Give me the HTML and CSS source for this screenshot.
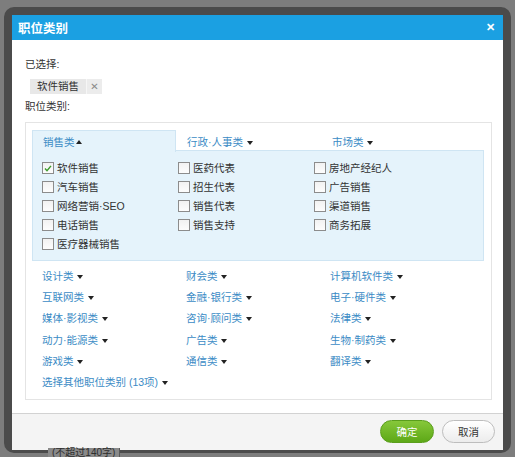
FILE: index.html
```html
<!DOCTYPE html>
<html lang="zh">
<head>
<meta charset="utf-8">
<link rel="stylesheet" href="styles.css">
</head>
<body>
<div class="page">
  <div class="under">(不超过140字)</div>
</div>
<div class="frame">
  <div class="dialog">
    <div class="hd">
      <span class="title">职位类别</span>
      <span class="close">✕</span>
    </div>
    <div class="bd">
      <div class="label">已选择:</div>
      <div class="tags">
        <span class="tag"><span class="tag-text">软件销售</span><span class="tag-x">✕</span></span>
      </div>
      <div class="label">职位类别:</div>
      <div class="box">
        <div class="tabs">
          <div class="tab active">销售类<span class="up"></span></div>
          <div class="tab">行政·人事类 <span class="down"></span></div>
          <div class="tab">市场类 <span class="down"></span></div>
        </div>
        <div class="panel">
          <label class="opt"><span class="cb checked"><svg viewBox="0 0 11 11" width="11" height="11"><path d="M2.2 5.6 L4.4 7.9 L8.8 2.6" fill="none" stroke="#3c9a2a" stroke-width="1.6"/></svg></span>软件销售</label>
          <label class="opt"><span class="cb"></span>医药代表</label>
          <label class="opt"><span class="cb"></span>房地产经纪人</label>
          <label class="opt"><span class="cb"></span>汽车销售</label>
          <label class="opt"><span class="cb"></span>招生代表</label>
          <label class="opt"><span class="cb"></span>广告销售</label>
          <label class="opt"><span class="cb"></span>网络营销·SEO</label>
          <label class="opt"><span class="cb"></span>销售代表</label>
          <label class="opt"><span class="cb"></span>渠道销售</label>
          <label class="opt"><span class="cb"></span>电话销售</label>
          <label class="opt"><span class="cb"></span>销售支持</label>
          <label class="opt"><span class="cb"></span>商务拓展</label>
          <label class="opt"><span class="cb"></span>医疗器械销售</label>
        </div>
        <div class="links">
          <a class="lk">设计类 <span class="down"></span></a>
          <a class="lk">财会类 <span class="down"></span></a>
          <a class="lk">计算机软件类 <span class="down"></span></a>
          <a class="lk">互联网类 <span class="down"></span></a>
          <a class="lk">金融·银行类 <span class="down"></span></a>
          <a class="lk">电子·硬件类 <span class="down"></span></a>
          <a class="lk">媒体·影视类 <span class="down"></span></a>
          <a class="lk">咨询·顾问类 <span class="down"></span></a>
          <a class="lk">法律类 <span class="down"></span></a>
          <a class="lk">动力·能源类 <span class="down"></span></a>
          <a class="lk">广告类 <span class="down"></span></a>
          <a class="lk">生物·制药类 <span class="down"></span></a>
          <a class="lk">游戏类 <span class="down"></span></a>
          <a class="lk">通信类 <span class="down"></span></a>
          <a class="lk">翻译类 <span class="down"></span></a>
          <a class="lk wide">选择其他职位类别 (13项) <span class="down"></span></a>
        </div>
      </div>
    </div>
    <div class="ft">
      <button class="btn ok">确定</button>
      <button class="btn cancel">取消</button>
    </div>
  </div>
</div>
</body>
</html>
```

FILE: styles.css
```css
* { box-sizing: border-box; }
html, body { margin: 0; padding: 0; }
body {
  width: 515px;
  height: 457px;
  overflow: hidden;
  background: #7d7d7d;
  font-family: "Liberation Sans", "Noto Sans CJK SC", sans-serif;
  font-size: 10.5px;
  color: #333;
  position: relative;
}
.page {
  padding: 446px 0 0 48px;
}
.under {
  position: relative;
  z-index: 1;
  display: inline-block;
  font-size: 10px;
  line-height: 10px;
  color: #2e2e2e;
  background: #8a8a8a;
  padding: 0 4px;
  border-right: 1px solid #5a5a5a;
}
.frame {
  position: absolute;
  left: 4px;
  top: 7px;
  width: 507px;
  height: 446px;
  background: #4b4b4b;
  border-radius: 10px;
  padding: 8px 8px 0 8px;
}
.dialog {
  background: #fff;
  width: 491px;
}
.hd {
  height: 25px;
  background: #1ba0e2;
  color: #fff;
  display: flex;
  align-items: center;
  justify-content: space-between;
  padding: 0 8px 0 6px;
}
.title {
  font-size: 12.5px;
  font-weight: bold;
}
.close {
  font-size: 11px;
  font-weight: bold;
  line-height: 1;
}
.bd {
  padding: 16px 11px 13px 13px;
}
.label {
  line-height: 16px;
  color: #333;
}
.tags {
  padding: 7px 0 4px 5px;
  display: flex;
}
.tag {
  display: flex;
  height: 15px;
  line-height: 15px;
  background: #e8e8e8;
}
.tag-text {
  padding: 0 7px 0 7px;
}
.tag-x {
  border-left: 1px solid #f6f6f6;
  width: 16px;
  text-align: center;
  color: #8a8a8a;
  font-family: "DejaVu Sans", sans-serif;
  font-size: 10px;
  background: #ececec;
}
.box {
  margin-top: 8px;
  border: 1px solid #e4e4e4;
  padding: 7px 7px 7px 6px;
}
.tabs {
  display: flex;
  height: 21px;
  border-bottom: 1px solid #cfe5f3;
}
.tab {
  width: 145px;
  padding-left: 10px;
  line-height: 22px;
  color: #3b8bc5;
  border: 1px solid transparent;
  border-bottom: none;
}
.tab.active {
  width: 144px;
  background: #e5f3fb;
  border-color: #cfe5f3;
  height: 22px;
  line-height: 22px;
}
.up {
  display: inline-block;
  width: 0; height: 0;
  border-left: 3.5px solid transparent;
  border-right: 3.5px solid transparent;
  border-bottom: 4px solid #222;
  vertical-align: 2px;
  margin-left: 1px;
}
.down {
  display: inline-block;
  width: 0; height: 0;
  border-left: 3.5px solid transparent;
  border-right: 3.5px solid transparent;
  border-top: 4px solid #222;
  vertical-align: 1px;
  margin-left: 1px;
}
.panel {
  background: #e5f3fb;
  border: 1px solid #cfe5f3;
  border-top: none;
  padding: 7px 0 7px 9px;
  display: grid;
  grid-template-columns: 136px 136px 136px;
  grid-auto-rows: 19px;
}
.opt {
  display: flex;
  align-items: center;
  color: #333;
  white-space: nowrap;
}
.cb {
  width: 12px;
  height: 12px;
  border: 1px solid #8c8c8c;
  background: linear-gradient(#f2f2f2, #fdfdfd);
  margin-right: 3px;
  display: inline-flex;
  flex: none;
}
.cb svg { margin: 0; }
.links {
  padding: 4px 0 0 10px;
  display: grid;
  grid-template-columns: 144px 144px 144px;
  grid-auto-rows: 21.2px;
  align-items: center;
}
.lk {
  color: #3b8bc5;
  white-space: nowrap;
}
.lk.wide { grid-column: 1 / span 3; }
.ft {
  border-top: 1px solid #d2d2d2;
  background: #f4f4f4;
  height: 37px;
  display: flex;
  justify-content: flex-end;
  align-items: flex-start;
  padding: 6px 8px 0 0;
  gap: 8px;
}
.btn {
  font-family: "Liberation Sans", "Noto Sans CJK SC", sans-serif;
  font-size: 10.5px;
  height: 23px;
  border-radius: 12px;
  padding: 0;
  cursor: pointer;
}
.ok {
  width: 54px;
  color: #fff;
  border: 1px solid #5a9e1c;
  background: linear-gradient(#86c83a, #5da817);
}
.cancel {
  width: 53px;
  color: #333;
  border: 1px solid #bdbdbd;
  background: linear-gradient(#ffffff, #ececec);
}
```
